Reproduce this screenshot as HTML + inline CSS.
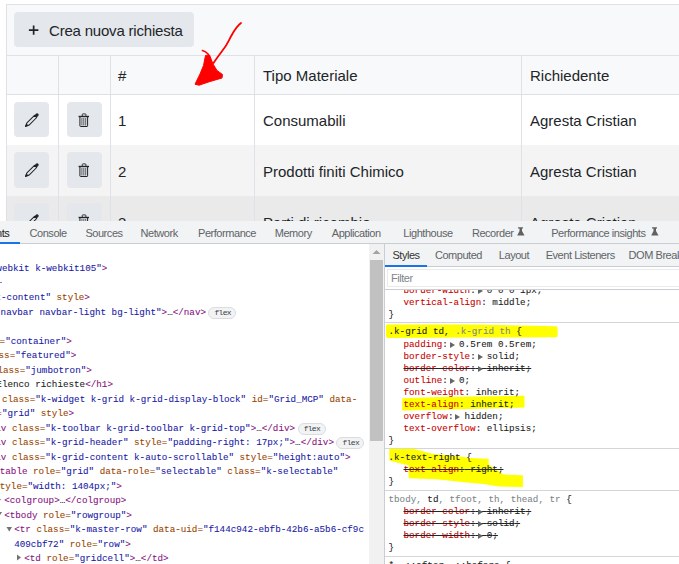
<!DOCTYPE html>
<html><head><meta charset="utf-8">
<style>
*{margin:0;padding:0;box-sizing:border-box}
html,body{width:679px;height:564px;overflow:hidden;background:#fff}
body{position:relative;font-family:"Liberation Sans",sans-serif;color:#212529}
.a{position:absolute}
.pg{font-size:15px;line-height:18px;white-space:pre;color:#212529}
.vl{position:absolute;width:1px;background:#dee2e6}
.btn{position:absolute;background:#e4e7eb;border-radius:4px}
/* devtools */
#dt{position:absolute;left:0;top:221px;width:679px;height:343px;background:#fff;overflow:hidden}
.tab{position:absolute;font-size:11px;line-height:12px;letter-spacing:-0.45px;color:#5f6368;white-space:pre;top:6px}
.mono{font-family:"Liberation Mono",monospace;font-size:9.267px;line-height:12px;white-space:pre;position:absolute;-webkit-text-stroke:0.08px}
.t{color:#881280}.an{color:#994500}.av{color:#1a1aa6}.tx{color:#222}
.pn{color:#c80000}.vv{color:#222}.gr{color:#80868b}
.st{text-decoration:line-through}
.badge{position:absolute;width:28px;height:12px;border:1px solid #dadce0;border-radius:6px;background:#f1f3f4;font-family:"Liberation Mono",monospace;font-size:8px;letter-spacing:-0.7px;text-indent:0.7px;line-height:10px;color:#3c4043;text-align:center}
.ar{position:relative}.ar::before{content:"";position:absolute;left:2.0px;top:3.1px;border-left:5px solid #666;border-top:3.1px solid transparent;border-bottom:3.1px solid transparent}
.sep{position:absolute;left:385px;width:294px;height:1px;background:#e0e0e0}
</style></head><body>

<!-- ============ PAGE ============ -->
<!-- grid outer border -->
<div class="a" style="left:6px;top:4px;width:700px;height:1px;background:#dee2e6"></div>
<div class="a" style="left:6px;top:4px;width:1px;height:220px;background:#dee2e6"></div>
<!-- toolbar -->
<div class="a" style="left:7px;top:5px;width:680px;height:50px;background:#f8f9fa"></div>
<div class="a" style="left:7px;top:55px;width:680px;height:1px;background:#dee2e6"></div>
<div class="btn" style="left:14px;top:12px;width:180px;height:35px"></div>
<svg class="a" style="left:0;top:0" width="60" height="60"><path d="M28.9 30.1 H38.4 M33.65 25.4 V34.8" stroke="#212529" stroke-width="1.7"/></svg>
<div class="pg a" style="left:49px;top:22px;letter-spacing:-0.2px">Crea nuova richiesta</div>
<!-- header -->
<div class="a" style="left:7px;top:56px;width:680px;height:38px;background:#f8f9fa"></div>
<div class="a" style="left:7px;top:94px;width:680px;height:1px;background:#dee2e6"></div>
<div class="pg a" style="left:118px;top:67px">#</div>
<div class="pg a" style="left:263px;top:67px">Tipo Materiale</div>
<div class="pg a" style="left:530px;top:67px">Richiedente</div>
<!-- rows -->
<div class="a" style="left:7px;top:95px;width:680px;height:50px;background:#fff"></div>
<div class="a" style="left:7px;top:145px;width:680px;height:51px;background:#f4f4f4"></div>
<div class="a" style="left:7px;top:196px;width:680px;height:30px;background:#eaeaea"></div>
<!-- vertical lines -->
<div class="vl" style="left:58px;top:56px;height:170px"></div>
<div class="vl" style="left:110px;top:56px;height:170px"></div>
<div class="vl" style="left:254px;top:56px;height:170px"></div>
<div class="vl" style="left:521px;top:56px;height:170px"></div>
<!-- buttons -->
<div class="btn" style="left:14px;top:102px;width:35px;height:35px"></div>
<div class="btn" style="left:67px;top:102px;width:35px;height:35px"></div>
<div class="btn" style="left:14px;top:152px;width:35px;height:36px"></div>
<div class="btn" style="left:67px;top:152px;width:35px;height:36px"></div>
<div class="btn" style="left:14px;top:203px;width:35px;height:35px"></div>
<div class="btn" style="left:67px;top:203px;width:35px;height:35px"></div>
<!-- icons -->
<svg class="a" style="left:0;top:0" width="679" height="221" viewBox="0 0 679 221">
  <g id="pencil">
    <path d="M25.5 126.5 L26.9 122.9 L34.5 115.3 L36.7 117.5 L29.1 125.1 Z" fill="none" stroke="#212529" stroke-width="1.05" stroke-linejoin="round"/>
    <path d="M34.2 115.6 L36.3 113.5 Q37.1 112.9 37.9 113.6 L38.4 114.1 Q39.0 114.9 38.4 115.7 L36.4 117.8 Z" fill="#212529"/>
    <path d="M25.2 126.8 L26.3 123.3 L28.7 125.7 Z" fill="#212529"/>
  </g>
  <use href="#pencil" y="50"/>
  <use href="#pencil" y="101"/>
  <g id="trash" fill="none" stroke="#212529">
    <path d="M79.9 117 V125.9 Q79.9 126.5 80.6 126.5 H87.0 Q87.6 126.5 87.6 125.9 V117" stroke-width="1"/>
    <path d="M78.6 116.5 H89.0" stroke-width="1.4"/>
    <path d="M82.3 116 V114.4 Q82.3 113.9 82.9 113.9 H85.3 Q85.9 113.9 85.9 114.4 V116" stroke-width="0.9"/>
    <path d="M81.9 118 V125.5 M83.8 118 V125.5 M85.7 118 V125.5" stroke-width="0.7"/>
  </g>
  <use href="#trash" y="50"/>
  <use href="#trash" y="101"/>
</svg>
<div class="pg a" style="left:118px;top:112px">1</div>
<div class="pg a" style="left:263px;top:112px">Consumabili</div>
<div class="pg a" style="left:530px;top:112px">Agresta Cristian</div>
<div class="pg a" style="left:118px;top:163px">2</div>
<div class="pg a" style="left:263px;top:163px">Prodotti finiti Chimico</div>
<div class="pg a" style="left:530px;top:163px">Agresta Cristian</div>
<div class="pg a" style="left:118px;top:214px">3</div>
<div class="pg a" style="left:263px;top:214px">Parti di ricambio</div>
<div class="pg a" style="left:530px;top:214px">Agresta Cristian</div>
<!-- red scribble arrow -->
<svg class="a" style="left:0;top:0" width="679" height="221" viewBox="0 0 679 221">
  <path d="M241 23 C237.5 25.5 234.5 30 231.5 35.5 C229 40 227 44.5 224 48.5 C221 52.5 217.5 57 213.5 63" fill="none" stroke="#f00" stroke-width="1.8" stroke-linecap="round" stroke-linejoin="round"/>
  <path d="M202.4 50.6 Q206 51.5 208 54 L210 58" fill="none" stroke="#f00" stroke-width="1.5" stroke-linecap="round"/>
  <path d="M205.5 55.5 L209.5 55 L213 64 L217 70.5 L222.5 74.5 L222 78 L210 81.5 L199 85.2 L195 84.2 L200 74 L203.5 65.5 Z" fill="#f00" stroke="#f00" stroke-width="1" stroke-linejoin="round"/>
</svg>

<!-- ============ DEVTOOLS ============ -->
<div id="dt">
  <!-- main tab bar -->
  <div class="a" style="left:0;top:0;width:679px;height:22px;background:#f1f3f4"></div>
  <div class="a" style="left:0;top:22px;width:679px;height:1px;background:#cacdd1"></div>
  <div class="a" style="left:0;top:21px;width:20px;height:2px;background:#1a73e8"></div>
  <div class="tab" style="left:-32.9px;color:#202124">Elements</div>
  <div class="tab" style="left:29.5px">Console</div>
  <div class="tab" style="left:85.4px">Sources</div>
  <div class="tab" style="left:140.5px">Network</div>
  <div class="tab" style="left:198px">Performance</div>
  <div class="tab" style="left:274.7px">Memory</div>
  <div class="tab" style="left:331.8px">Application</div>
  <div class="tab" style="left:403.3px">Lighthouse</div>
  <div class="tab" style="left:471.9px">Recorder</div>
  <div class="tab" style="left:551.2px">Performance insights</div>
  <svg class="a" style="left:515px;top:4px" width="12" height="12"><path d="M3 2.3 H8 V3.5 H7 V6 L9.5 10.5 H2.2 L4.5 6 V3.5 H3 Z" fill="#616161"/></svg>
  <svg class="a" style="left:649.2px;top:4px" width="12" height="12"><path d="M3 2.3 H8 V3.5 H7 V6 L9.5 10.5 H2.2 L4.5 6 V3.5 H3 Z" fill="#616161"/></svg>

  <!-- DOM tree -->
  <div class="a" style="left:0;top:23px;width:369px;height:320px;overflow:hidden">
    <div class="a" style="left:0;top:-23px;width:369px;height:343px">
<div class="a" style="left:0;top:61px;width:1.5px;height:1px;background:#8080d0"></div>
<div class="mono" style="left:-25.86px;top:42.00px"><span class="an">=</span><span class="av">"k-webkit k-webkit105"</span><span class="t">&gt;</span></div>
<div class="mono" style="left:-4.52px;top:71.00px"><span class="av">t-content"</span><span class="an"> style</span><span class="t">&gt;</span></div>
<div class="mono" style="left:0.60px;top:85.50px"><span class="av">navbar navbar-light bg-light"</span><span class="t">&gt;</span><span class="tx">…</span><span class="t">&lt;/nav&gt;</span></div>
<div class="mono" style="left:-55.92px;top:114.50px"><span class="t">&lt;div</span><span class="an"> class=</span><span class="av">"container"</span><span class="t">&gt;</span></div>
<div class="mono" style="left:-45.90px;top:129.00px"><span class="t">&lt;div</span><span class="an"> class=</span><span class="av">"featured"</span><span class="t">&gt;</span></div>
<div class="mono" style="left:-35.88px;top:143.50px"><span class="t">&lt;div</span><span class="an"> class=</span><span class="av">"jumbotron"</span><span class="t">&gt;</span></div>
<div class="mono" style="left:-25.86px;top:158.00px"><span class="t">&lt;h1&gt;</span><span class="tx">Elenco richieste</span><span class="t">&lt;/h1&gt;</span></div>
<div class="mono" style="left:-25.86px;top:172.50px"><span class="t">&lt;div</span><span class="an"> class=</span><span class="av">"k-widget k-grid k-grid-display-block"</span><span class="an"> id=</span><span class="av">"Grid_MCP"</span><span class="an"> data-</span></div>
<div class="mono" style="left:-25.86px;top:187.00px"><span class="an">role=</span><span class="av">"grid"</span><span class="an"> style</span><span class="t">&gt;</span></div>
<div class="mono" style="left:-15.84px;top:201.50px"><span class="t">&lt;div</span><span class="an"> class=</span><span class="av">"k-toolbar k-grid-toolbar k-grid-top"</span><span class="t">&gt;</span><span class="tx">…</span><span class="t">&lt;/div&gt;</span></div>
<div class="mono" style="left:-15.84px;top:216.00px"><span class="t">&lt;div</span><span class="an"> class=</span><span class="av">"k-grid-header"</span><span class="an"> style=</span><span class="av">"padding-right: 17px;"</span><span class="t">&gt;</span><span class="tx">…</span><span class="t">&lt;/div&gt;</span></div>
<div class="mono" style="left:-15.84px;top:230.50px"><span class="t">&lt;div</span><span class="an"> class=</span><span class="av">"k-grid-content k-auto-scrollable"</span><span class="an"> style=</span><span class="av">"height:auto"</span><span class="t">&gt;</span></div>
<div class="mono" style="left:-5.82px;top:245.00px"><span class="t">&lt;table</span><span class="an"> role=</span><span class="av">"grid"</span><span class="an"> data-role=</span><span class="av">"selectable"</span><span class="an"> class=</span><span class="av">"k-selectable"</span></div>
<div class="mono" style="left:-5.82px;top:259.50px"><span class="an">style=</span><span class="av">"width: 1404px;"</span><span class="t">&gt;</span></div>
<div class="mono" style="left:4.20px;top:274.00px"><span class="t">&lt;colgroup&gt;</span><span class="tx">…</span><span class="t">&lt;/colgroup&gt;</span></div>
<div class="mono" style="left:4.20px;top:288.50px"><span class="t">&lt;tbody</span><span class="an"> role=</span><span class="av">"rowgroup"</span><span class="t">&gt;</span></div>
<div class="mono" style="left:14.22px;top:303.00px"><span class="t">&lt;tr</span><span class="an"> class=</span><span class="av">"k-master-row"</span><span class="an"> data-uid=</span><span class="av">"f144c942-ebfb-42b6-a5b6-cf9c</span></div>
<div class="mono" style="left:14.22px;top:317.50px"><span class="av">409cbf72"</span><span class="an"> role=</span><span class="av">"row"</span><span class="t">&gt;</span></div>
<div class="mono" style="left:24.24px;top:332.00px"><span class="t">&lt;td</span><span class="an"> role=</span><span class="av">"gridcell"</span><span class="t">&gt;</span><span class="tx">…</span><span class="t">&lt;/td&gt;</span></div>
<svg class="a" style="left:-4.00px;top:275.00px" width="6" height="7"><path d="M1 0.5 L5 3.5 L1 6.5Z" fill="#727272"/></svg>
<svg class="a" style="left:-4.20px;top:290.00px" width="7" height="6"><path d="M0.5 1 L6 1 L3.25 5.5Z" fill="#727272"/></svg>
<svg class="a" style="left:5.82px;top:304.50px" width="7" height="6"><path d="M0.5 1 L6 1 L3.25 5.5Z" fill="#727272"/></svg>
<svg class="a" style="left:16.04px;top:333.00px" width="6" height="7"><path d="M1 0.5 L5 3.5 L1 6.5Z" fill="#727272"/></svg>
<svg class="a" style="left:-24.04px;top:202.50px" width="6" height="7"><path d="M1 0.5 L5 3.5 L1 6.5Z" fill="#727272"/></svg>
<svg class="a" style="left:-24.04px;top:217.00px" width="6" height="7"><path d="M1 0.5 L5 3.5 L1 6.5Z" fill="#727272"/></svg>
<svg class="a" style="left:-24.24px;top:232.00px" width="7" height="6"><path d="M0.5 1 L6 1 L3.25 5.5Z" fill="#727272"/></svg>
<svg class="a" style="left:-14.22px;top:246.50px" width="7" height="6"><path d="M0.5 1 L6 1 L3.25 5.5Z" fill="#727272"/></svg>
<div class="badge" style="left:208.32px;top:85.50px">flex</div>
<div class="badge" style="left:297.52px;top:201.50px">flex</div>
<div class="badge" style="left:336.44px;top:216.00px">flex</div>

    </div>
  </div>

  <!-- scrollbar -->
  <div class="a" style="left:369px;top:23px;width:15px;height:320px;background:#f1f1f1"></div>
  <svg class="a" style="left:369px;top:23px" width="15" height="15"><path d="M3.5 10 L7.5 6 L11.5 10 Z" fill="#a3a3a3"/></svg>
  <div class="a" style="left:370px;top:39px;width:13px;height:181px;background:#c1c1c1"></div>

  <!-- sidebar -->
  <div class="a" style="left:384px;top:23px;width:1px;height:320px;background:#cacdd1"></div>
  <div class="a" style="left:385px;top:23px;width:294px;height:22px;background:#f1f3f4"></div>
  <div class="a" style="left:385px;top:45px;width:294px;height:1px;background:#cacdd1"></div>
  <div class="a" style="left:385px;top:44px;width:42px;height:2px;background:#1a73e8"></div>
  <div class="tab" style="left:392.4px;top:28.2px;color:#333">Styles</div>
  <div class="tab" style="left:434.9px;top:28.2px">Computed</div>
  <div class="tab" style="left:498.8px;top:28.2px">Layout</div>
  <div class="tab" style="left:545.7px;top:28.2px">Event Listeners</div>
  <div class="tab" style="left:628.6px;top:28.2px">DOM Breakpoints</div>
  <!-- filter -->
  <div class="a" style="left:385px;top:46px;width:294px;height:22px;background:#fff"></div>
  <div class="a" style="left:386.5px;top:47.5px;width:300px;height:18.5px;border:1px solid #e8eaed;background:#fff"></div>
  <div class="tab" style="left:391px;top:51.4px;color:#80868b">Filter</div>
  <!-- styles content -->
  <div class="a" style="left:385px;top:69px;width:294px;height:274px;overflow:hidden">
    <div class="a" style="left:-385px;top:-69px;width:679px;height:343px">
<svg class="a" style="left:0;top:0" width="679" height="343" viewBox="0 221 679 343">
  <rect x="385" y="322" width="294" height="1" fill="#d3d5d9"/>
  <rect x="385" y="448" width="294" height="1" fill="#d3d5d9"/>
  <rect x="385" y="490" width="294" height="1" fill="#d3d5d9"/>
  <rect x="385" y="556" width="294" height="1" fill="#d3d5d9"/>
  <g fill="#ffff00">
  <path d="M387 324.5 L470 324.5 L556 326.2 Q557.6 326.5 557.6 328 L557.6 336 Q557.4 337.2 556 337.2 L470 337.6 L388 338 Q386 337.8 386 336.5 L386 326 Q386.2 324.6 387 324.5 Z"/>
  <path d="M402.2 398.2 L440 397 L524.5 395.8 L524.5 407.5 L470 409 L402.2 410.6 Z"/>
  <path d="M389.3 448.7 L413.4 448.7 L431 453.4 L464 457 L470.5 458.1 L488.7 458.7 L488.7 464.5 L503.5 474.6 L522.9 475.2 L522.9 487 L498.8 486.4 L483.4 484 L464 482.3 L437 479.3 L408.7 478.2 L408.7 465.5 L389.3 460.5 Z"/>
  </g>
</svg>
<div class="mono " style="left:403.50px;top:64.30px"><span class="pn">border-width</span><span class="vv">:</span><span class="ar">&nbsp;</span><span class="vv"> </span><span class="vv">0 0 0 1px</span><span class="vv">;</span></div>
<div class="mono " style="left:403.50px;top:76.20px"><span class="pn">vertical-align</span><span class="vv">:</span><span class="vv"> </span><span class="vv">middle</span><span class="vv">;</span></div>
<div class="mono " style="left:388.50px;top:88.00px"><span class="vv">}</span></div>
<div class="mono " style="left:388.50px;top:105.00px"><span class="vv">.k-grid td, </span><span class="gr">.k-grid th</span><span class="vv"> {</span></div>
<div class="mono " style="left:403.50px;top:117.60px"><span class="pn">padding</span><span class="vv">:</span><span class="ar">&nbsp;</span><span class="vv"> </span><span class="vv">0.5rem 0.5rem</span><span class="vv">;</span></div>
<div class="mono " style="left:403.50px;top:129.68px"><span class="pn">border-style</span><span class="vv">:</span><span class="ar">&nbsp;</span><span class="vv"> </span><span class="vv">solid</span><span class="vv">;</span></div>
<div class="mono st" style="left:403.50px;top:141.76px"><span class="pn">border-color</span><span class="vv">:</span><span class="ar">&nbsp;</span><span class="vv"> </span><span class="vv">inherit</span><span class="vv">;</span></div>
<div class="mono " style="left:403.50px;top:153.84px"><span class="pn">outline</span><span class="vv">:</span><span class="ar">&nbsp;</span><span class="vv"> </span><span class="vv">0</span><span class="vv">;</span></div>
<div class="mono " style="left:403.50px;top:165.92px"><span class="pn">font-weight</span><span class="vv">:</span><span class="vv"> </span><span class="vv">inherit</span><span class="vv">;</span></div>
<div class="mono " style="left:403.50px;top:178.00px"><span class="pn">text-align</span><span class="vv">:</span><span class="vv"> </span><span class="vv">inherit</span><span class="vv">;</span></div>
<div class="mono " style="left:403.50px;top:190.08px"><span class="pn">overflow</span><span class="vv">:</span><span class="ar">&nbsp;</span><span class="vv"> </span><span class="vv">hidden</span><span class="vv">;</span></div>
<div class="mono " style="left:403.50px;top:202.16px"><span class="pn">text-overflow</span><span class="vv">:</span><span class="vv"> </span><span class="vv">ellipsis</span><span class="vv">;</span></div>
<div class="mono " style="left:388.50px;top:214.24px"><span class="vv">}</span></div>
<div class="mono " style="left:388.50px;top:230.80px"><span class="vv">.k-text-right {</span></div>
<div class="mono st" style="left:403.50px;top:243.00px"><span class="pn">text-align</span><span class="vv">:</span><span class="vv"> </span><span class="vv">right</span><span class="vv">;</span></div>
<div class="mono " style="left:388.50px;top:255.10px"><span class="vv">}</span></div>
<div class="mono " style="left:388.50px;top:272.80px"><span class="gr">tbody, </span><span class="vv">td</span><span class="gr">, tfoot, th, thead, tr</span><span class="vv"> {</span></div>
<div class="mono st" style="left:403.50px;top:285.00px"><span class="pn">border-color</span><span class="vv">:</span><span class="ar">&nbsp;</span><span class="vv"> </span><span class="vv">inherit</span><span class="vv">;</span></div>
<div class="mono st" style="left:403.50px;top:297.20px"><span class="pn">border-style</span><span class="vv">:</span><span class="ar">&nbsp;</span><span class="vv"> </span><span class="vv">solid</span><span class="vv">;</span></div>
<div class="mono st" style="left:403.50px;top:309.40px"><span class="pn">border-width</span><span class="vv">:</span><span class="ar">&nbsp;</span><span class="vv"> </span><span class="vv">0</span><span class="vv">;</span></div>
<div class="mono " style="left:388.50px;top:321.40px"><span class="vv">}</span></div>
<div class="mono " style="left:388.50px;top:339.00px"><span class="vv">*, ::after, ::before {</span></div>

    </div>
  </div>
  <div class="a" style="left:385px;top:68px;width:294px;height:1px;background:#cacdd1"></div>
</div>
</body></html>
